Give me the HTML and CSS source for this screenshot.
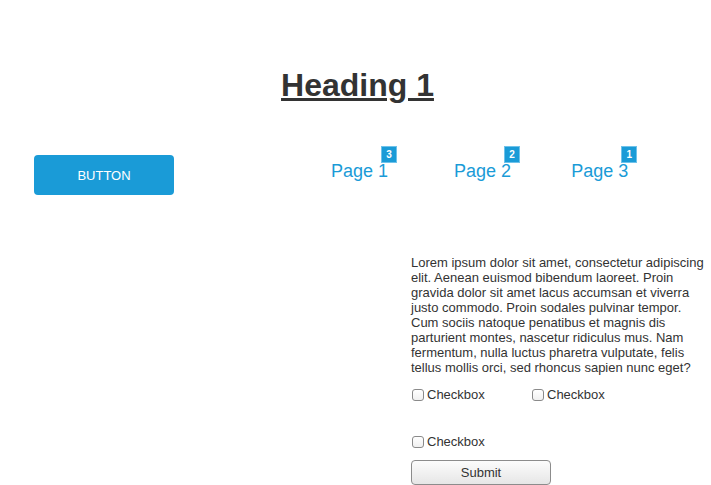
FILE: index.html
```html
<!DOCTYPE html>
<html lang="en">
<head>
<meta charset="utf-8">
<title>Wireframe</title>
<link rel="stylesheet" href="styles.css">
</head>
<body>
<header class="hero">
  <h1 class="hero-title">Heading 1</h1>
</header>
<section class="toolbar">
  <a class="btn-primary" href="#">BUTTON</a>
  <nav class="pages">
    <a class="page-link" href="#">Page 1<span class="badge">3</span></a>
    <a class="page-link" href="#">Page 2<span class="badge">2</span></a>
    <a class="page-link" href="#">Page 3<span class="badge">1</span></a>
  </nav>
</section>
<section class="content">
  <form class="panel">
    <p class="panel-text">Lorem ipsum dolor sit amet, consectetur adipiscing elit. Aenean euismod bibendum laoreet. Proin gravida dolor sit amet lacus accumsan et viverra justo commodo. Proin sodales pulvinar tempor. Cum sociis natoque penatibus et magnis dis parturient montes, nascetur ridiculus mus. Nam fermentum, nulla luctus pharetra vulputate, felis tellus mollis orci, sed rhoncus sapien nunc eget?</p>
    <div class="check-row">
      <label class="check"><span class="check-box"></span>Checkbox</label>
      <label class="check"><span class="check-box"></span>Checkbox</label>
    </div>
    <div class="check-row check-row-second">
      <label class="check"><span class="check-box"></span>Checkbox</label>
    </div>
    <button class="btn-submit" type="button">Submit</button>
  </form>
</section>
</body>
</html>
```

FILE: styles.css
```css
html, body {
  margin: 0;
  padding: 0;
  background: #ffffff;
}

body {
  font-family: "Liberation Sans", Arial, sans-serif;
  color: #333333;
  width: 711px;
}

.hero {
  padding-top: 67px;
  padding-left: 4px;
  text-align: center;
}

.hero-title {
  margin: 0;
  font-size: 32px;
  font-weight: bold;
  line-height: normal;
  color: #333333;
  text-decoration: underline;
}

.toolbar {
  display: flex;
  align-items: flex-start;
  margin-top: 51px;
  padding-left: 34px;
}

.btn-primary {
  display: flex;
  align-items: center;
  justify-content: center;
  width: 140px;
  height: 40px;
  border-radius: 4px;
  background: #1a9bd7;
  color: #ffffff;
  font-size: 13px;
  text-decoration: none;
}

.pages {
  display: flex;
  margin-left: 157px;
  padding-top: 6px;
}

.page-link {
  position: relative;
  font-size: 18px;
  line-height: normal;
  color: #1a9bd7;
  text-decoration: none;
  margin-right: 66px;
}

.page-link:nth-child(2) {
  margin-right: 60px;
}

.page-link:last-child {
  margin-right: 0;
}

.badge {
  position: absolute;
  top: -15px;
  right: -9px;
  width: 16px;
  height: 17px;
  box-sizing: border-box;
  border: 1px solid #6fc2ea;
  background: #1a9bd7;
  color: #ffffff;
  font-size: 10px;
  font-weight: bold;
  line-height: 15px;
  text-align: center;
}

.content {
  display: flex;
  justify-content: flex-end;
  margin-top: 60px;
}

.panel {
  width: 300px;
  display: flex;
  flex-direction: column;
  align-items: flex-start;
}

.panel-text {
  margin: 0;
  font-size: 13px;
  line-height: normal;
  color: #333333;
}

.check-row {
  display: flex;
  margin-top: 12px;
}

.check-row-second {
  margin-top: 32px;
}

.check {
  display: inline-flex;
  align-items: center;
  width: 120px;
  font-size: 13px;
  line-height: normal;
  color: #333333;
}

.check-box {
  width: 12px;
  height: 12px;
  box-sizing: border-box;
  margin-left: 1px;
  margin-right: 3px;
  border: 1px solid #8a8a8a;
  border-radius: 3px;
  background: linear-gradient(#ffffff, #f0f0f0);
}

.btn-submit {
  margin-top: 11px;
  width: 140px;
  height: 25px;
  box-sizing: border-box;
  border: 1px solid #8c8c8c;
  border-radius: 4px;
  background: linear-gradient(#fcfcfc, #e6e6e6);
  font-family: "Liberation Sans", Arial, sans-serif;
  font-size: 13px;
  color: #333333;
  padding: 0;
}
```
